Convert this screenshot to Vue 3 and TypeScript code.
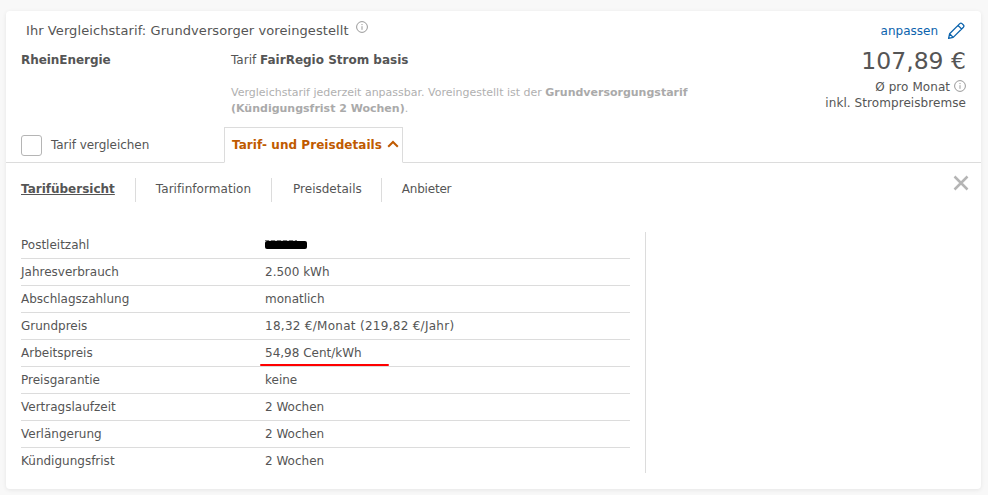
<template>
  <div class="page">
    <section class="card">
      <header class="head">
        <div class="head-left">
          <div class="compare-title">
            Ihr Vergleichstarif: Grundversorger voreingestellt
            <svg class="info info-top" viewBox="0 0 12 12"><circle cx="6" cy="6" r="5.4" /><path d="M6 5.2v3.6M6 3v1.1" /></svg>
          </div>
          <div class="tarif-row">
            <strong class="provider">RheinEnergie</strong>
            <div class="tarif-col">
              <div class="tarif-name">Tarif <b>FairRegio Strom basis</b></div>
              <p class="note">
                Vergleichstarif jederzeit anpassbar. Voreingestellt ist der <b>Grundversorgungstarif</b><br />
                <b>(Kündigungsfrist 2 Wochen)</b>.
              </p>
            </div>
          </div>
        </div>
        <div class="head-right">
          <a class="edit">
            anpassen
            <svg class="pencil" viewBox="0 0 18 18"><path d="M1.6 16.4l1-4.6L12.8 1.6a1.6 1.6 0 0 1 2.2 0l1.4 1.4a1.6 1.6 0 0 1 0 2.2L6.2 15.4z M2.6 11.8l3.6 3.6M11 3.4l3.6 3.6" /></svg>
          </a>
          <div class="price">107,89 €</div>
          <div class="price-sub">
            Ø pro Monat
            <svg class="info" viewBox="0 0 12 12"><circle cx="6" cy="6" r="5.4" /><path d="M6 5.2v3.6M6 3v1.1" /></svg>
          </div>
          <div class="price-sub">inkl. Strompreisbremse</div>
        </div>
      </header>

      <div class="tab-row">
        <label class="check"><span class="box"></span>Tarif vergleichen</label>
        <div class="tab">
          Tarif- und Preisdetails
          <svg class="chevron" viewBox="0 0 12 8"><path d="M1.2 6.8L6 2l4.8 4.8" /></svg>
        </div>
      </div>

      <nav class="subnav">
        <a v-for="(item, i) in navItems" :key="item" class="subnav-item" :class="{ active: i === 0 }">{{ item }}</a>
        <svg class="close" viewBox="0 0 16 16"><path d="M1.5 1.5l13 13M14.5 1.5l-13 13" /></svg>
      </nav>

      <div class="details">
        <div class="table">
          <div v-for="row in rows" :key="row.label" class="row">
            <span class="label">{{ row.label }}</span>
            <span class="value" :class="{ marked: row.marked, wide: row.wide }">
              <i v-if="row.hidden" class="redacted"></i>
              {{ row.value }}
            </span>
          </div>
        </div>
        <div class="side"></div>
      </div>
    </section>
  </div>
</template>

<script setup lang="ts">
interface Row {
  label: string
  value: string
  hidden?: boolean
  marked?: boolean
  wide?: boolean
}

const navItems = ['Tarifübersicht', 'Tarifinformation', 'Preisdetails', 'Anbieter']

const rows: Row[] = [
  { label: 'Postleitzahl', value: '', hidden: true },
  { label: 'Jahresverbrauch', value: '2.500 kWh' },
  { label: 'Abschlagszahlung', value: 'monatlich' },
  { label: 'Grundpreis', value: '18,32 €/Monat (219,82 €/Jahr)', wide: true },
  { label: 'Arbeitspreis', value: '54,98 Cent/kWh', marked: true },
  { label: 'Preisgarantie', value: 'keine' },
  { label: 'Vertragslaufzeit', value: '2 Wochen' },
  { label: 'Verlängerung', value: '2 Wochen' },
  { label: 'Kündigungsfrist', value: '2 Wochen' },
]
</script>

<style>
html, body { background: #f8f8f8; }
</style>

<style scoped>
.page {
  height: 495px;
  padding: 11px 7px 6px 6px;
  box-sizing: border-box;
  font: 12px/15px "DejaVu Sans", Verdana, sans-serif;
  color: #555;
}
.card {
  height: 478px;
  background: #fff;
  border-radius: 4px;
  box-shadow: 0 1px 4px rgba(0, 0, 0, .08);
  display: flex;
  flex-direction: column;
}

/* Kopf */
.head { display: flex; height: 116px; padding: 0 15px; }
.head-left { flex: 1; }
.compare-title { padding: 10px 0 0 5px; height: 26px; font-size: 13px; letter-spacing: .08px; }
.tarif-row { display: flex; padding-top: 6px; }
.provider { width: 210px; color: #555; letter-spacing: -.05px; }
.tarif-name b { color: #555; }
.note { margin: 17px 0 0; color: #b0b0b0; font-size: 11px; line-height: 15.5px; }
.note b { color: #aaa; }
.head-right { text-align: right; padding-top: 11px; }
.edit { display: flex; justify-content: flex-end; align-items: center; gap: 9px; color: #0b63ad; height: 18px; margin-right: 2px; }
.pencil { width: 18px; height: 18px; fill: none; stroke: #0b63ad; stroke-width: 1.3; stroke-linejoin: round; margin-right: -1px; }
.price { font-size: 23.5px; line-height: 28px; margin: 7px 0 5px; color: #555; }
.price-sub { line-height: 15.5px; letter-spacing: .07px; }
.info { width: 12px; height: 12px; fill: none; stroke: #999; stroke-width: 1; vertical-align: -1px; }
.info-top { vertical-align: 2px; margin-left: 3px; }

/* Tabs */
.tab-row { display: flex; align-items: flex-end; height: 35px; padding: 0 15px; border-bottom: 1px solid #dcdcdc; position: relative; }
.check { display: flex; align-items: center; width: 203px; height: 35px; color: #555; padding-top: 2px; box-sizing: border-box; letter-spacing: -.05px; }
.box { width: 19px; height: 19px; border: 1px solid #b5b5b5; border-radius: 3px; margin-right: 9px; }
.tab {
  width: 179px;
  height: 36px;
  box-sizing: border-box;
  margin-bottom: -1px;
  padding: 10px 0 0 7px;
  border: 1px solid #dcdcdc;
  border-bottom: 1px solid #fff;
  background: #fff;
  color: #c05a00;
  font-weight: 700;
  white-space: nowrap;
  letter-spacing: .05px;
}
.chevron { width: 12px; height: 8px; fill: none; stroke: #c05a00; stroke-width: 2; margin-left: 1px; vertical-align: 1px; }

/* Untermenü */
.subnav { display: flex; align-items: center; padding: 15px 15px 0; height: 24px; position: relative; }
.subnav-item { height: 24px; line-height: 22px; padding: 0 20px; border-left: 1px solid #dcdcdc; letter-spacing: .05px; }
.subnav-item:first-child { padding-left: 0; border-left: 0; }
.subnav-item:nth-child(3) { padding: 0 19px 0 21px; letter-spacing: 0; }
.subnav-item:nth-child(4) { letter-spacing: -.2px; }
.subnav-item.active { font-weight: 700; text-decoration: underline; letter-spacing: 0; }
.close { position: absolute; right: 12px; top: 12px; width: 16px; height: 16px; fill: none; stroke: #b5b5b5; stroke-width: 2.5; }

/* Tabelle */
.details { display: flex; padding: 30px 15px 0; }
.table { width: 609px; }
.row { display: flex; height: 27px; align-items: center; box-sizing: border-box; border-bottom: 1px solid #dcdcdc; }
.row:last-child { border-bottom: 0; }
.label { width: 244px; }
.value { position: relative; }
.value.wide { letter-spacing: .28px; }
.redacted { display: block; width: 42px; height: 8px; background: #000; border-radius: 2px; position: relative; }
.redacted::before {
  content: "";
  position: absolute;
  left: 0;
  right: 10px;
  top: -1px;
  height: 1px;
  background: repeating-linear-gradient(90deg, #777 0 4px, #ddd 4px 6px);
}
.marked::after {
  content: "";
  position: absolute;
  left: -5px;
  right: -27px;
  bottom: -5px;
  height: 2px;
  background: #f00;
  border-radius: 1px;
}
.side { width: 1px; height: 241px; margin-left: 15px; background: #dcdcdc; }
</style>
